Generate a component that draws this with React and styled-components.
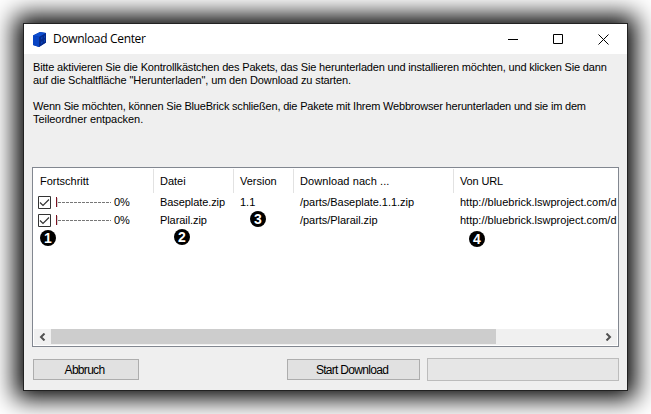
import React from "react";
import styled, { createGlobalStyle } from "styled-components";

const Global = createGlobalStyle`
  * { box-sizing: border-box; }
  body { margin: 0; background: #fff; overflow: hidden; }
`;
const Desktop = styled.div`
  width: 651px; height: 414px; padding: 23px; overflow: hidden; background: #fff;
  font: 11px/13px "Liberation Sans", Arial, sans-serif; color: #000;
`;
const Window = styled.main`
  width: 605px; height: 368px; border: 1px solid #222; background: #efefef;
  display: flex; flex-direction: column; box-shadow: 0 0 23px 8px #000;
`;
const TitleBar = styled.header`
  height: 30px; flex: none; background: #fff; display: flex; align-items: center; padding-left: 8px;
`;
const Title = styled.h1`
  margin: 0 auto 0 6px; font: 12px/16px "Open Sans", "Noto Sans", sans-serif;
  letter-spacing: ${(p) => p.$spacing}px;
`;
const Caption = styled.div`
  width: 45px; height: 30px; display: grid; place-items: center;
  svg { display: block; }
  &:last-child { margin-right: 1px; }
`;
const Copy = styled.section`
  height: 113px; flex: none; padding: 7px 0 0 9px;
`;
const Line = styled.div`
  height: 13px; white-space: nowrap; letter-spacing: ${(p) => p.$spacing || 0}px;
`;
const List = styled.section`
  position: relative; width: 587px; height: 180px; margin-left: 8px; flex: none;
  border: 1px solid #828790; background: #fff; padding: 1px;
  display: flex; flex-direction: column; overflow: hidden;
`;
const Row = styled.div`
  display: grid; grid-template-columns: 120px 80px 60px 160px 1fr;
  height: 18px; line-height: 18px; width: 583px; overflow: hidden; flex: none;
`;
const Header = styled(Row)`
  height: 24px; line-height: 24px;
`;
const Cell = styled.div`
  padding-left: 6px; white-space: nowrap; overflow: hidden;
  letter-spacing: ${(p) => p.$spacing || 0}px;
`;
const HeadCell = styled(Cell)`
  border-right: 1px solid #e2e2e2;
  &:last-child { border-right: 0; }
`;
const ProgressCell = styled(Cell)`
  padding-left: 4px; display: flex; align-items: center; gap: 3px;
  svg { flex: none; }
  svg + svg { margin-left: 2px; }
`;
const Badge = styled.span`
  position: absolute; left: ${(p) => p.$x}px; top: ${(p) => p.$y}px;
  width: 16px; height: 16px; border-radius: 50%; background: #000; color: #fff;
  font: bold 14px/16px "Liberation Sans", Arial, sans-serif; text-align: center;
`;
const Scroll = styled.div`
  height: 16px; margin-top: auto; background: #f0f0f0; display: flex; flex: none; padding-bottom: 1px;
`;
const Arrow = styled.div`
  width: 17px; display: grid; place-items: center;
  &:last-child { margin-left: auto; }
`;
const Thumb = styled.div`
  width: 445px; background: #cdcdcd;
`;
const Footer = styled.footer`
  display: flex; align-items: center; padding: 11px 0 0 9px; height: 34px;
`;
const Button = styled.button`
  width: ${(p) => p.$w}px; height: 21px; border: 1px solid #adadad; background: #e1e1e1;
  padding: 2px 3px 0 0; font: 12px/17px "Liberation Sans", Arial, sans-serif; color: #000;
  letter-spacing: ${(p) => p.$spacing || 0}px; margin-right: ${(p) => p.$gap}px;
`;
const Progress = styled.div`
  width: 192px; height: 23px; border: 1px solid #bcbcbc; background: #e6e6e6;
`;

const Brick = () => (
  <svg width="15" height="17" viewBox="0 0 15 17">
    <path d="M1 4.500 8 1l6 1v9.500L7 16l-6-2z" fill="#0636a5" />
    <path d="m1 4.500 7-3.500 6 1-6 4z" fill="#0f4fd0" />
    <path d="m1 4.500 6 1.500v10l-6-2z" fill="#0844c4" />
    <path d="m7 6 7-4v9.500L7 16z" fill="#052a8c" />
    <path d="m9 6.500 1.500-1v2L9 8.500zM12 5l1-.5v2l-1 .5zM9 11l1.500-1v2L9 13zM12 9l1-.5v2l-1 .5z" fill="#0b45ba" />
  </svg>
);
const Check = () => (
  <svg width="13" height="13" viewBox="0 0 13 13">
    <path d="M.5.5h12v12H.5z" fill="#fff" stroke="#333" />
    <path d="m2 6.500 3 3 6-6" fill="none" stroke="#333" strokeWidth="1.200" />
  </svg>
);
const Gauge = () => (
  <svg width="55" height="11" viewBox="0 0 55 11" shapeRendering="crispEdges">
    <path d="M2 5.500H55" stroke="#777" strokeDasharray="3 1" />
    <path d="M.5 0v10" stroke="#7d1020" />
    <path d="M1.500 1v9" stroke="#333" opacity=".2" />
  </svg>
);

const files = [
  ["Baseplate.zip", "1.1", "/parts/Baseplate.1.1.zip"],
  ["Plarail.zip", "", "/parts/Plarail.zip"],
];

export default function App() {
  return (
    <Desktop>
      <Global />
      <Window>
        <TitleBar>
          <Brick />
          <Title $spacing={-0.33}>Download Center</Title>
          <Caption><svg width="11" height="11"><path d="M0 5.500h10" stroke="#000" /></svg></Caption>
          <Caption><svg width="11" height="11"><path d="M.5.500h9v9h-9z" fill="none" stroke="#000" /></svg></Caption>
          <Caption><svg width="11" height="11"><path d="m.5.500 10 10m0-10-10 10" stroke="#000" /></svg></Caption>
        </TitleBar>
        <Copy>
          <Line $spacing={-0.17}>Bitte aktivieren Sie die Kontrollkästchen des Pakets, das Sie herunterladen und installieren möchten, und klicken Sie dann</Line>
          <Line $spacing={-0.12}>auf die Schaltfläche "Herunterladen", um den Download zu starten.</Line>
          <Line />
          <Line $spacing={-0.19}>Wenn Sie möchten, können Sie BlueBrick schließen, die Pakete mit Ihrem Webbrowser herunterladen und sie im dem</Line>
          <Line $spacing={-0.05}>Teileordner entpacken.</Line>
        </Copy>
        <List>
          <Header>
            <HeadCell>Fortschritt</HeadCell>
            <HeadCell>Datei</HeadCell>
            <HeadCell>Version</HeadCell>
            <HeadCell $spacing={0.08}>Download nach ...</HeadCell>
            <HeadCell $spacing={-0.15}>Von URL</HeadCell>
          </Header>
          {files.map(([name, version, target]) => (
            <Row key={name}>
              <ProgressCell><Check /><Gauge />0%</ProgressCell>
              <Cell $spacing={-0.08}>{name}</Cell>
              <Cell>{version}</Cell>
              <Cell $spacing={-0.04}>{target}</Cell>
              <Cell>http://bluebrick.lswproject.com/d</Cell>
            </Row>
          ))}
          <Badge $x={7} $y={62}>1</Badge>
          <Badge $x={141} $y={61}>2</Badge>
          <Badge $x={217} $y={43}>3</Badge>
          <Badge $x={436} $y={63}>4</Badge>
          <Scroll>
            <Arrow><svg width="7" height="8"><path d="M5.500.500 2 4l3.500 3.500" fill="none" stroke="#505050" strokeWidth="2" /></svg></Arrow>
            <Thumb />
            <Arrow><svg width="7" height="8"><path d="M1.500.500 5 4 1.500 7.500" fill="none" stroke="#505050" strokeWidth="2" /></svg></Arrow>
          </Scroll>
        </List>
        <Footer>
          <Button $w={106} $gap={148} $spacing={-0.7}>Abbruch</Button>
          <Button $w={133} $gap={7} $spacing={-0.7}>Start Download</Button>
          <Progress />
        </Footer>
      </Window>
    </Desktop>
  );
}
